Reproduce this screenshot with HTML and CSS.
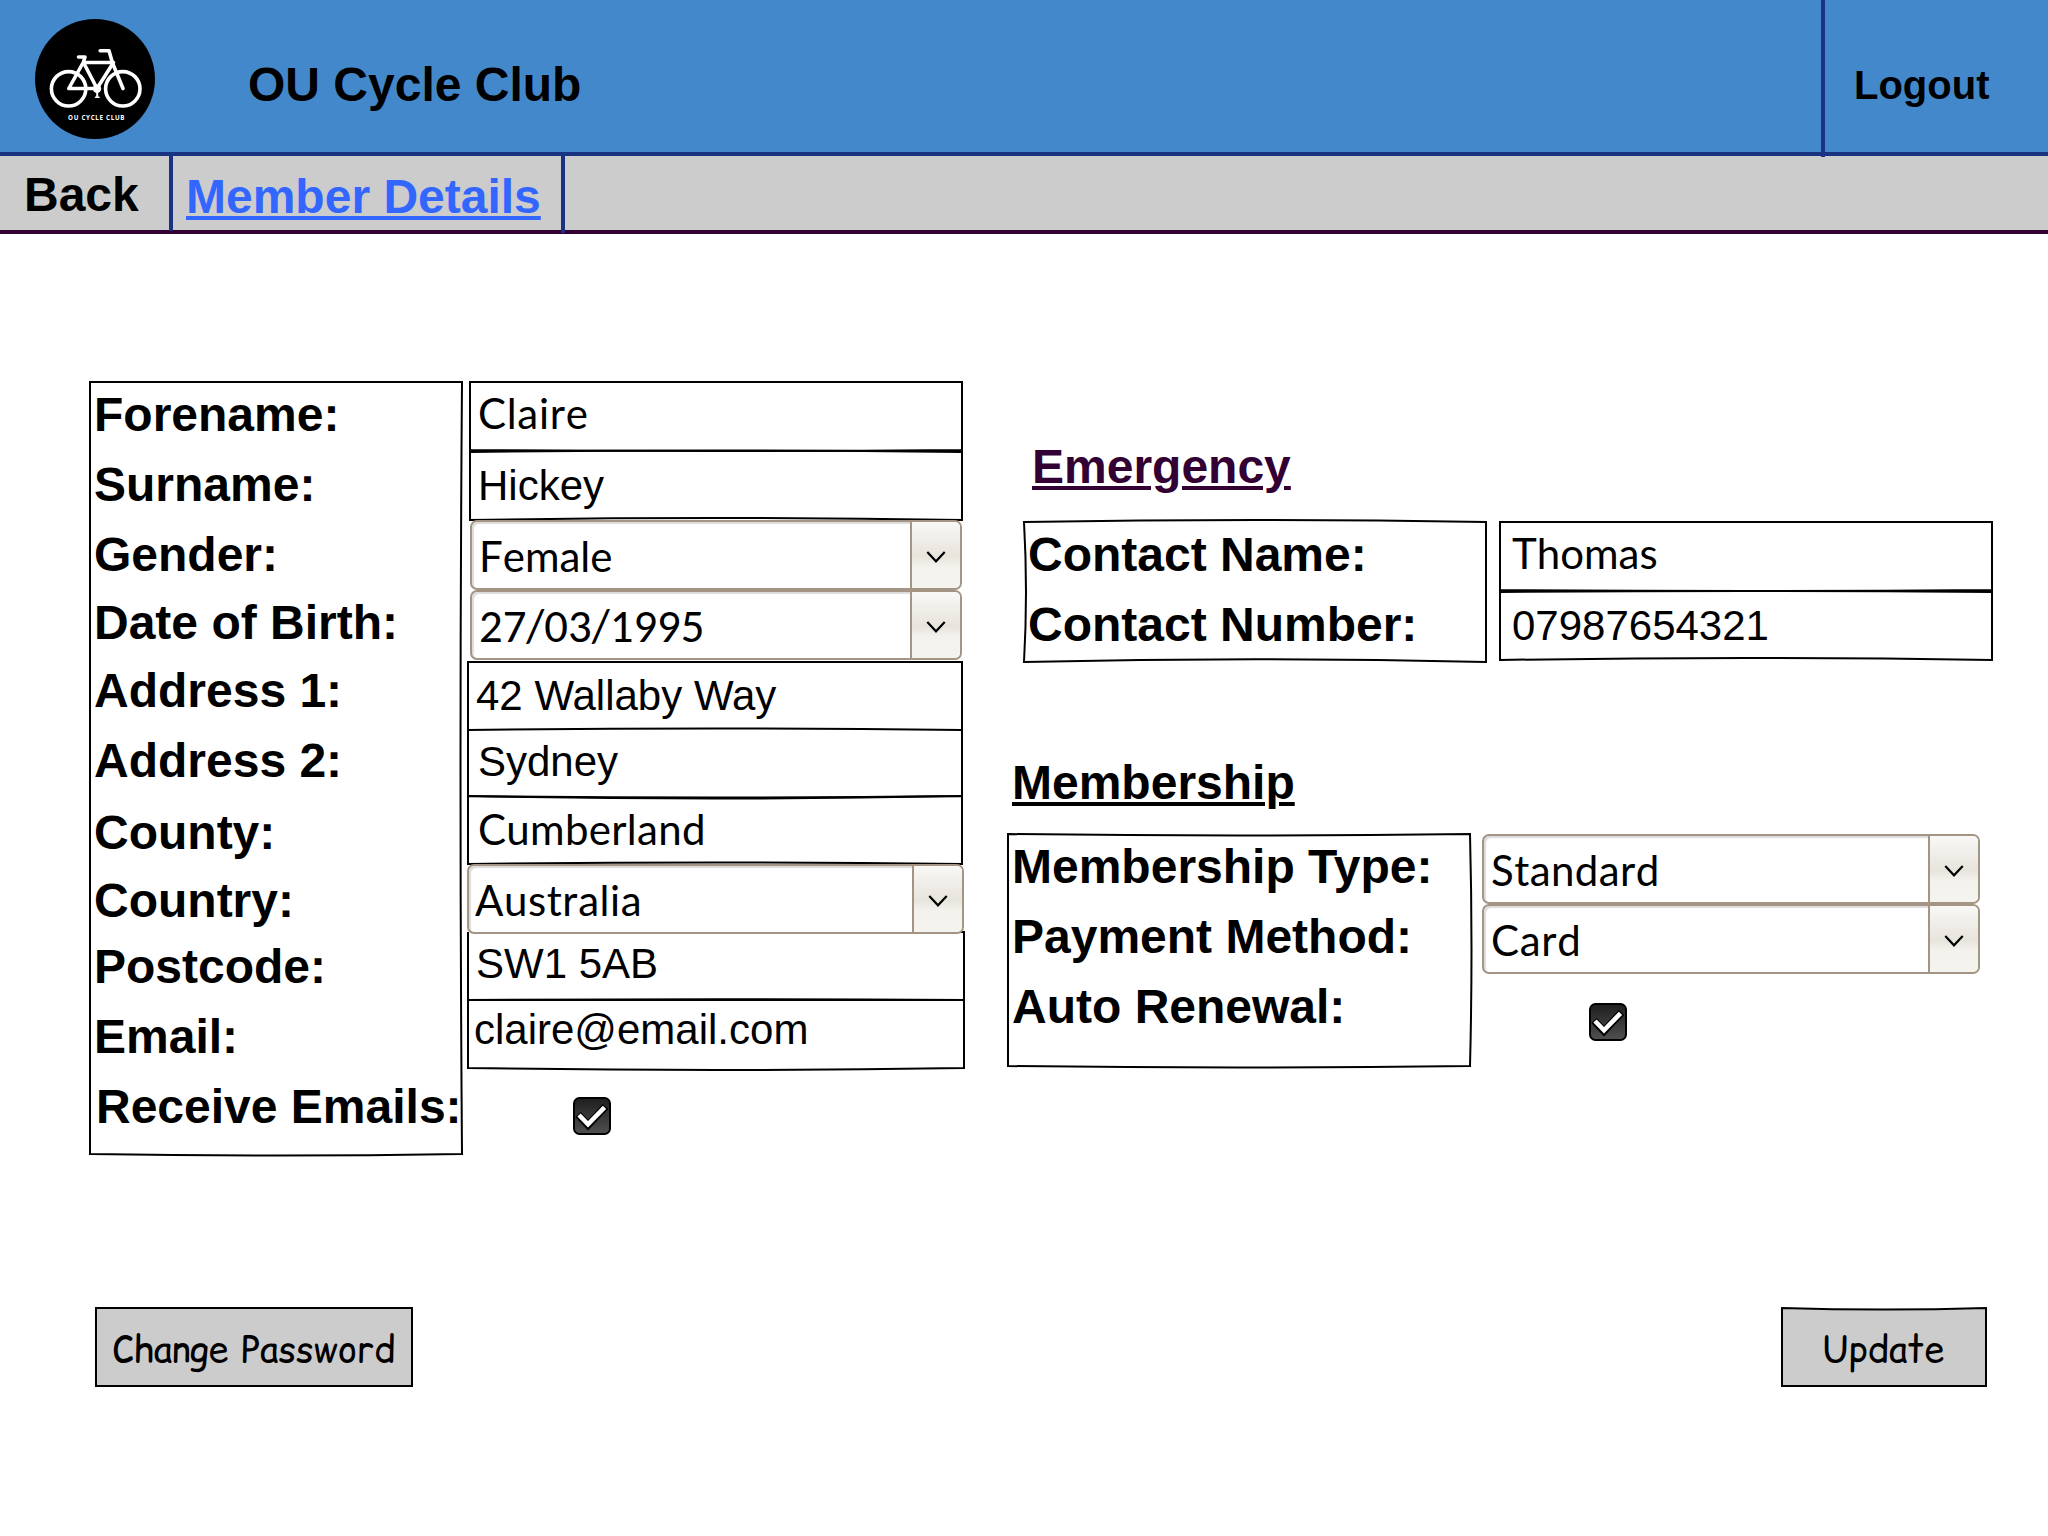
FILE: index.html
```html
<!DOCTYPE html>
<html lang="en">
<head>
<meta charset="utf-8">
<title>OU Cycle Club - Member Details</title>
<link rel="stylesheet" href="styles.css">
</head>
<body>
<header class="topbar">
  <svg class="logo" viewBox="0 0 120 120" width="120" height="120">
    <circle cx="60" cy="60" r="60" fill="#000"/>
    <g fill="none" stroke="#fff" stroke-width="3.6" stroke-linecap="round" stroke-linejoin="round">
      <circle cx="33.6" cy="69.8" r="17.2"/>
      <circle cx="87.8" cy="69.8" r="17.2"/>
      <path d="M43.5 38h6.5l-1.500 5L33.800 69.500H61"/>
      <path d="M48.500 43.500 62 69.500 78.500 43.500H48.500"/>
      <path d="M65.200 31.800h8.800L77.500 44 88 69.500"/>
      <path d="M62.200 70v8" stroke-width="2"/>
      <path d="M60.500 78.200h3.500" stroke-width="1.600"/>
    </g>
    <circle cx="62" cy="69.800" r="4.200" fill="#fff"/>
    <text class="logo-text" x="33" y="101" textLength="56.500">OU CYCLE CLUB</text>
  </svg>
  <h1 class="title">OU Cycle Club</h1>
  <a class="logout">Logout</a>
</header>
<nav class="navbar">
  <a class="nav-item back">Back</a>
  <a class="nav-item current">Member Details</a>
</nav>
<main>
  <div class="content">
    <section class="panel personal">
      <svg class="frame"><path d="M1 1H373Q370 387 373 773Q187 776 1 773Z"/></svg>
      <label class="h70">Forename:</label>
      <label class="h70">Surname:</label>
      <label class="h68">Gender:</label>
      <label class="h68">Date of Birth:</label>
      <label class="h70">Address 1:</label>
      <label class="h72">Address 2:</label>
      <label class="h68">County:</label>
      <label class="h66">Country:</label>
      <label class="h70">Postcode:</label>
      <label class="h70">Email:</label>
      <label class="indent">Receive Emails:</label>
    </section>
    <section class="fields">
      <div class="field forename"><svg class="frame"><path d="M1 1H493V69Q247 71 1 69Z"/></svg><span class="lato">Claire</span></div>
      <div class="field surname"><svg class="frame"><path d="M1 1Q247 -2 493 1V69Q247 65 1 69Z"/></svg><span>Hickey</span></div>
      <div class="select gender"><span class="lato">Female</span><i class="drop"><svg viewBox="0 0 18 11"><path d="M1 1 9 9.500 17 1"/></svg></i></div>
      <div class="select birth"><span class="digits">27/03/1995</span><i class="drop"><svg viewBox="0 0 18 11"><path d="M1 1 9 9.500 17 1"/></svg></i></div>
      <div class="field wide address1"><svg class="frame"><path d="M1 1H495V69Q247 66 1 69Z"/></svg><span>42 Wallaby Way</span></div>
      <div class="field wide address2"><svg class="frame"><path d="M1 0V66Q247 69 495 66V0"/></svg><span>Sydney</span></div>
      <div class="field wide county"><svg class="frame"><path d="M495 0V68Q247 65 1 68V0Q247 5 495 0"/></svg><span class="lato">Cumberland</span></div>
      <div class="select country"><span class="lato">Australia</span><i class="drop"><svg viewBox="0 0 18 11"><path d="M1 1 9 9.500 17 1"/></svg></i></div>
      <div class="field wider postcode"><svg class="frame"><path d="M1 0V68Q247 66.500 497 68V0H490"/></svg><span>SW1 5AB</span></div>
      <div class="field wider email"><svg class="frame"><path d="M1 0V68Q247 72 497 68V0Z"/></svg><span>claire@email.com</span></div>
      <svg class="check receive" viewBox="0 0 38 38"><use href="#checkmark"/></svg>
    </section>
    <div class="side">
      <h2 class="emergency-title">Emergency</h2>
      <div class="group emergency">
        <section class="panel contact">
          <svg class="frame"><path d="M1 1Q232 -3 463 1V141Q232 135.500 1 141Q5 71 1 1Z"/></svg>
          <label class="h70">Contact Name:</label>
          <label class="h70">Contact Number:</label>
        </section>
        <section class="fields">
          <div class="field cname"><svg class="frame"><path d="M1 1H493V69Q247 71 1 69Z"/></svg><span class="lato">Thomas</span></div>
          <div class="field cnumber"><svg class="frame"><path d="M1 1Q247 -1 493 1V69Q247 65 1 69Z"/></svg><span>07987654321</span></div>
        </section>
      </div>
      <h2 class="member-title">Membership</h2>
      <div class="group membership">
        <section class="panel plan">
          <svg class="frame"><path d="M1 1Q232 4 463 1Q466 117 463 233Q232 236 1 233Z"/></svg>
          <label class="h70">Membership Type:</label>
          <label class="h70">Payment Method:</label>
          <label class="h70">Auto Renewal:</label>
        </section>
        <section class="fields">
          <div class="select type"><span class="lato">Standard</span><i class="drop"><svg viewBox="0 0 18 11"><path d="M1 1 9 9.500 17 1"/></svg></i></div>
          <div class="select payment"><span class="lato">Card</span><i class="drop"><svg viewBox="0 0 18 11"><path d="M1 1 9 9.500 17 1"/></svg></i></div>
          <svg class="check renewal" viewBox="0 0 38 38">
            <defs>
              <linearGradient id="dark" x1="0" y1="0" x2="0" y2="1"><stop offset="0" stop-color="#1e1e1e"/><stop offset="1" stop-color="#505050"/></linearGradient>
              <g id="checkmark">
                <rect x="1" y="1" width="36" height="36" rx="5.500" fill="url(#dark)" stroke="#000" stroke-width="2"/>
                <path d="M5 17.500 15 28 32.500 9.500" fill="none" stroke="#000" stroke-width="7.500"/>
                <path d="M6 18 15 27.300 31.500 10.300" fill="none" stroke="#fff" stroke-width="4.600"/>
              </g>
            </defs>
            <use href="#checkmark"/>
          </svg>
        </section>
      </div>
    </div>
  </div>
  <div class="actions">
    <button class="btn change"><svg class="frame"><path d="M1 1H317V79H1Z"/></svg><span><span class="tight">Change</span> Password</span></button>
    <button class="btn update"><svg class="frame"><path class="gap" d="M1 0H205L205 1Q103 4 1 1Z"/><path d="M1 1Q103 4 205 1V79H1Z"/></svg><span>Update</span></button>
  </div>
</main>
</body>
</html>
```
FILE: styles.css
```css
* { box-sizing: border-box; }

body {
  margin: 0;
  width: 2048px;
  height: 1536px;
  overflow: hidden;
  background: #fff;
  color: #000;
  font-family: "Liberation Sans", Arial, sans-serif;
}

h1, h2, label, .nav-item {
  display: block;
  margin: 0;
  font-size: 48px;
  font-weight: bold;
  line-height: 56px;
  white-space: nowrap;
}

/* header */
.topbar {
  display: flex;
  align-items: flex-start;
  height: 156px;
  padding-left: 35px;
  background: #4488cc;
  border-bottom: 4px solid #1a3380;
}
.logo { margin-top: 19px; }
.logo-text { fill: #fff; font-family: "Open Sans", sans-serif; font-size: 6.200px; font-weight: bold; }
.title { margin: 57px 0 0 93px; }
.logout {
  position: relative;
  width: 227px;
  height: 157px;
  margin-left: auto;
  padding: 61px 0 0 29px;
  border-left: 4px solid #1a3380;
  font-size: 40px;
  font-weight: bold;
  line-height: 48px;
}

.navbar {
  display: flex;
  height: 78px;
  background: #ccc;
  border-bottom: 4px solid #330033;
}
.nav-item { border-right: 4px solid #1a3380; }
.back { width: 173px; height: 75px; padding: 11px 0 0 24px; }
.current {
  width: 392px;
  height: 77px;
  padding: 13px 0 0 13px;
  color: #36f;
  text-decoration: underline 4px;
  text-underline-offset: 3px;
}

/* form */
.content { display: flex; height: 774px; margin: 147px 0 0 89px; }
.group { display: flex; }
.frame {
  position: absolute;
  left: 0;
  top: 0;
  width: 100%;
  height: 100%;
  overflow: visible;
  fill: none;
  stroke: #000;
  stroke-width: 2px;
}
.panel { position: relative; flex: none; }
.personal { width: 374px; height: 774px; padding: 6px 0 0 5px; margin-right: 3px; }
.h66 { height: 66px; }
.h68 { height: 68px; }
.h70 { height: 70px; }
.h72 { height: 72px; }
.indent { padding-left: 2px; }

.field, .select { position: relative; font-size: 42px; line-height: 50px; white-space: nowrap; }
.field span, .select span { display: block; }
.lato { font-family: Lato, Carlito, sans-serif; font-kerning: none; }
.select .digits { font-family: Carlito, Calibri, Lato, sans-serif; font-size: 46.700px; }
.field { width: 494px; height: 70px; }
.wide { width: 496px; }
.wider { width: 498px; }
.select {
  display: flex;
  justify-content: space-between;
  width: 492px;
  height: 70px;
  background: #fff;
  border: 2px solid #a39483;
  border-radius: 7px;
  box-shadow: inset 2px 2px 1px #dcdcdc;
}
.drop {
  display: flex;
  align-items: center;
  justify-content: center;
  width: 50px;
  height: 66px;
  border-left: 2px solid #a39483;
  border-radius: 0 5px 5px 0;
  background: linear-gradient(#f9f8f6, #e7e4dc 52%, #f3f2ed 68%, #f4f3ee);
}
.drop svg { width: 20px; height: 12px; margin-top: 3px; fill: none; stroke: #000; stroke-width: 2px; }

.content > .fields { width: 500px; }
.forename { margin-left: 3px; padding: 7px 0 0 9px; letter-spacing: .700px; }
.surname { margin-left: 3px; padding: 10px 0 0 9px; }
.gender { margin: -1px 0 0 4px; padding: 9px 0 0 7px; }
.birth { margin-left: 4px; padding: 10px 0 0 7px; }
.gender .drop, .country .drop, .type .drop, .payment .drop { margin-top: -9px; }
.birth .drop { margin-top: -10px; }
.address1 { height: 69px; margin: 1px 0 0 1px; padding: 10px 0 0 9px; }
.address2 { height: 66px; margin-left: 1px; padding: 7px 0 0 11px; }
.county { height: 68px; margin-left: 1px; padding: 8px 0 0 11px; letter-spacing: .300px; }
.country { z-index: 1; width: 497px; margin-left: 1px; padding: 9px 0 0 6px; letter-spacing: .550px; }
.postcode { height: 68px; margin: -2px 0 0 1px; padding: 7px 0 0 9px; }
.email { height: 68px; margin-left: 1px; padding: 5px 0 0 7px; }
.check { display: block; width: 38px; height: 38px; }
.receive { margin: 29px 0 0 107px; }

.side { margin-left: 41px; }
.emergency-title, .member-title { text-decoration: underline 4px; text-underline-offset: 3px; }
.emergency-title { margin: 58px 0 0 25px; color: #330033; }
.emergency { margin: 26px 0 0 16px; height: 142px; }
.contact { width: 464px; height: 142px; padding: 6px 0 0 5px; }
.emergency .fields { margin-left: 12px; }
.cname { padding: 7px 0 0 13px; }
.cnumber { padding: 10px 0 0 13px; }
.member-title { margin: 92px 0 0 5px; }
.membership { margin-top: 22px; }
.plan { width: 464px; height: 234px; padding: 6px 0 0 5px; }
.membership .fields { padding-top: 1px; margin-left: 11px; }
.type, .payment { width: 498px; padding: 9px 0 0 7px; }
.type { letter-spacing: .400px; }
.payment { letter-spacing: .700px; }
.renewal { margin: 29px 0 0 107px; }

/* actions */
.actions { display: flex; justify-content: space-between; margin: 152px 61px 0 95px; }
.btn {
  position: relative;
  height: 80px;
  padding: 4px 0 0;
  border: 0;
  background: #ccc;
  color: #000;
  font: 36px/48px "Comic Relief", "Comic Sans MS", "Comic Neue", cursive;
}
.change { width: 318px; word-spacing: 3px; }
.tight { letter-spacing: -.600px; }
.update { width: 206px; padding-right: 2px; }
.btn .gap { fill: #fff; stroke: none; }
```
